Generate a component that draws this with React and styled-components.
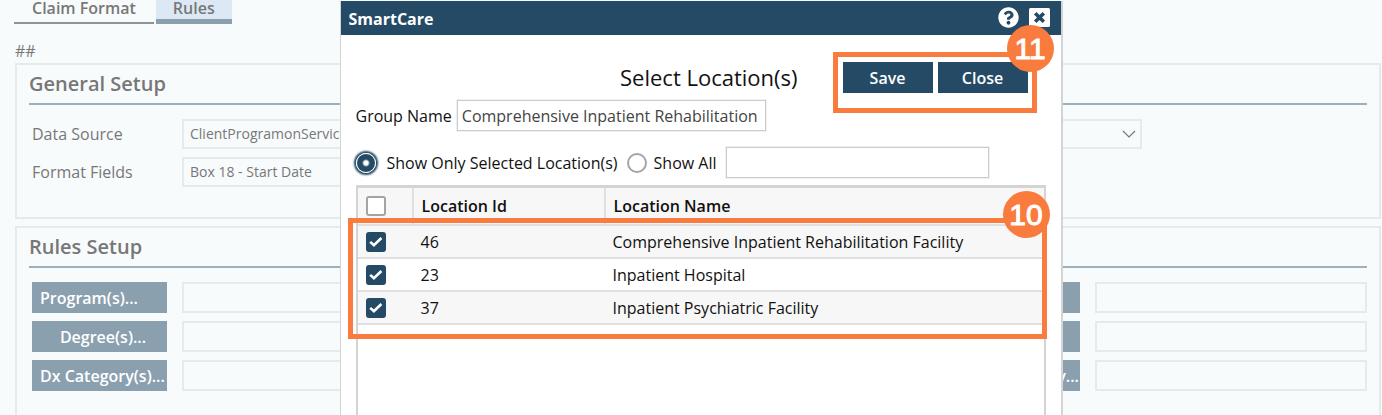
import React, { useState } from "react";
import styled, { createGlobalStyle, css } from "styled-components";
import { FaQuestionCircle } from "react-icons/fa";

const ruleRows = [
  { left: "Program(s)...", align: "flex-start", right: "Plan(s)...", rightAlign: "center" },
  { left: "Degree(s)...", align: "center", right: "Code(s)...", rightAlign: "center" },
  { left: "Dx Category(s)...", align: "flex-start", right: "Svc Category...", rightAlign: "flex-end" },
];

const locations = [
  { id: 46, name: "Comprehensive Inpatient Rehabilitation Facility" },
  { id: 23, name: "Inpatient Hospital" },
  { id: 37, name: "Inpatient Psychiatric Facility" },
];

function Checkbox({ label, checked, onChange }) {
  return (
    <CheckboxStyled>
      <input type="checkbox" aria-label={label} checked={checked} onChange={onChange} />
      {checked && (
        <svg width="20" height="20" viewBox="0 0 20 20" aria-hidden="true">
          <path d="M4.2 9.9 L7.9 13.3 L15.4 6" fill="none" stroke="#fff" strokeWidth="2.6" />
        </svg>
      )}
    </CheckboxStyled>
  );
}

function BillingRules() {
  return (
    <PageStyled>
      <TabsStyled>
        <TabStyled type="button">Claim Format</TabStyled>
        <TabStyled type="button" $active>Rules</TabStyled>
      </TabsStyled>
      <RecordMark>##</RecordMark>

      <PanelStyled>
        <h2>General Setup</h2>
        <FormRow>
          <label htmlFor="dataSource">Data Source</label>
          <SelectWrapper>
            <select id="dataSource">
              <option>ClientProgramonService</option>
            </select>
            <svg width="14" height="8" viewBox="0 0 14 8" aria-hidden="true">
              <path d="M1 1 L7 7 L13 1" fill="none" stroke="#777" strokeWidth="1.2" />
            </svg>
          </SelectWrapper>
        </FormRow>
        <FormRow $short>
          <label htmlFor="formatFields">Format Fields</label>
          <SelectWrapper>
            <select id="formatFields">
              <option>Box 18 - Start Date</option>
            </select>
          </SelectWrapper>
        </FormRow>
      </PanelStyled>

      <PanelStyled $last>
        <h2>Rules Setup</h2>
        <RulesGrid>
          {ruleRows.map((row) => (
            <React.Fragment key={row.left}>
              <RuleButton type="button" $align={row.align}>{row.left}</RuleButton>
              <RuleInput aria-label={row.left} />
              <RuleButton type="button" $align={row.rightAlign}>{row.right}</RuleButton>
              <RuleInput aria-label={row.right} />
            </React.Fragment>
          ))}
        </RulesGrid>
      </PanelStyled>
    </PageStyled>
  );
}

function LocationDialog() {
  //state
  const [filter, setFilter] = useState("selected");
  const [selectedIds, setSelectedIds] = useState([46, 23, 37]);
  const [groupName, setGroupName] = useState("Comprehensive Inpatient Rehabilitation Facility");
  const [search, setSearch] = useState("");

  //comportement
  const toggleLocation = (id) => {
    setSelectedIds(
      selectedIds.includes(id) ? selectedIds.filter((other) => other !== id) : [...selectedIds, id]
    );
  };

  //render
  return (
    <DialogStyled role="dialog" aria-label="SmartCare">
      <DialogHeader>
        <h1>SmartCare</h1>
        <IconButton type="button" aria-label="Help">
          <FaQuestionCircle size={21} color="#fff" />
        </IconButton>
        <IconButton type="button" aria-label="Close window">
          <svg width="21" height="19" viewBox="0 0 21 19">
            <rect width="21" height="19" rx="1.5" fill="#fff" />
            <path d="M6.2 5.2 L14.8 13.8 M14.8 5.2 L6.2 13.8" stroke="#254a66" strokeWidth="3.6" />
          </svg>
        </IconButton>
      </DialogHeader>

      <DialogBody>
        <TitleRow>
          <h2>Select Location(s)</h2>
          <ActionsStyled>
            <ActionButton type="button">Save</ActionButton>
            <ActionButton type="button">Close</ActionButton>
            <ActionsCallout>
              <Badge $right="-22px">11</Badge>
            </ActionsCallout>
          </ActionsStyled>
        </TitleRow>

        <GroupRow>
          <label htmlFor="groupName">Group Name</label>
          <TextField
            id="groupName"
            $width="309px"
            value={groupName}
            onChange={(event) => setGroupName(event.target.value)}
          />
        </GroupRow>

        <FilterRow>
          <RadioLabel>
            <input
              type="radio"
              name="filter"
              checked={filter === "selected"}
              onChange={() => setFilter("selected")}
            />
            Show Only Selected Location(s)
          </RadioLabel>
          <RadioLabel>
            <input
              type="radio"
              name="filter"
              checked={filter === "all"}
              onChange={() => setFilter("all")}
            />
            Show All
          </RadioLabel>
          <TextField
            aria-label="Search locations"
            $width="263px"
            value={search}
            onChange={(event) => setSearch(event.target.value)}
          />
        </FilterRow>

        <TableArea>
          <LocationTable>
            <colgroup>
              <col className="check" />
              <col className="id" />
              <col />
            </colgroup>
            <thead>
              <tr>
                <th><Checkbox label="Select all" checked={false} onChange={() => setSelectedIds([])} /></th>
                <th>Location Id</th>
                <th>Location Name</th>
              </tr>
            </thead>
            <tbody>
              {locations.map(({ id, name }) => (
                <tr key={id}>
                  <td>
                    <Checkbox
                      label={name}
                      checked={selectedIds.includes(id)}
                      onChange={() => toggleLocation(id)}
                    />
                  </td>
                  <td>{id}</td>
                  <td>{name}</td>
                </tr>
              ))}
            </tbody>
          </LocationTable>
          <RowsCallout>
            <Badge $right="-8px">10</Badge>
          </RowsCallout>
        </TableArea>
      </DialogBody>
    </DialogStyled>
  );
}

export default function App() {
  return (
    <>
      <GlobalStyle />
      <BillingRules />
      <OverlayStyled>
        <LocationDialog />
      </OverlayStyled>
    </>
  );
}

const GlobalStyle = createGlobalStyle`
  * {
    box-sizing: border-box;
  }
  body {
    margin: 0;
    background: #f7fbfc;
    font-family: "Open Sans", "Noto Sans", sans-serif;
    font-size: 16px;
    line-height: 20px;
    color: #111;
  }
  button, input, select {
    font: inherit;
    color: inherit;
    border-radius: 0;
  }
  h1, h2 {
    margin: 0;
  }
`;

const PageStyled = styled.main`
  display: flex;
  flex-direction: column;
  height: 100vh;
  overflow: hidden;
  padding: 0 1px 0 15px;
  color: #777;
`;

const TabsStyled = styled.nav`
  display: flex;
  gap: 2px;
  height: 24px;
  margin-left: -1px;
`;

const TabStyled = styled.button`
  height: 24px;
  padding: 0 18px 6px;
  border: none;
  border-bottom: 2px solid #8f9394;
  background: none;
  font-weight: 600;
  line-height: 16px;

  ${({ $active }) =>
    $active &&
    css`
      padding: 0 17px 5px;
      border-bottom: 5px solid #8aa0af;
      background: #dce9f5;
    `}
`;

const RecordMark = styled.div`
  margin: 17px 0 2px;
`;

const PanelStyled = styled.section`
  padding: 0 12px 22px;
  margin-bottom: 7px;
  border: 2px solid #e6eaeb;

  h2 {
    padding: 6px 0 6px;
    margin-bottom: 14px;
    border-bottom: 2px solid #9db0bc;
    font-size: 20px;
    font-weight: 600;
    line-height: 26px;
  }

  ${({ $last }) =>
    $last &&
    css`
      flex: 1;
      margin-bottom: 0;
      border-bottom: none;
    `}
`;

const FormRow = styled.div`
  display: grid;
  grid-template-columns: 150px 1fr;
  align-items: center;
  padding-left: 3px;
  padding-right: ${({ $short }) => ($short ? "50%" : "225px")};
  margin-bottom: 8px;
`;

const SelectWrapper = styled.div`
  position: relative;

  select {
    display: block;
    width: 100%;
    height: 30px;
    padding: 0 6px;
    appearance: none;
    border: 2px solid #e6eaeb;
    background: none;
    font-size: 14px;
  }
  svg {
    position: absolute;
    right: 6px;
    top: 11px;
    pointer-events: none;
  }
`;

const RulesGrid = styled.div`
  display: grid;
  grid-template-columns: 135px 1fr 135px 272px;
  gap: 8px 15px;
  padding-left: 3px;
`;

const RuleButton = styled.button`
  display: flex;
  align-items: center;
  justify-content: ${({ $align }) => $align};
  height: 31px;
  padding: 0 1px 0 8px;
  overflow: hidden;
  border: none;
  background: #8aa0af;
  color: #fff;
  font-weight: 600;
  white-space: nowrap;
`;

const RuleInput = styled.input`
  width: 100%;
  height: 31px;
  border: 2px solid #e6eaeb;
  background: none;
`;

const OverlayStyled = styled.div`
  position: fixed;
  inset: 0;
  display: flex;
  justify-content: center;
  padding: 1px 0 0 20px;
`;

const DialogStyled = styled.section`
  display: flex;
  flex-direction: column;
  flex: 0 1 723px;
  border: solid #d4d4d4;
  border-width: 0 2px 0 1px;
  background: #fff;
`;

const DialogHeader = styled.header`
  display: flex;
  align-items: center;
  gap: 10px;
  height: 34px;
  padding: 0 11px 2px 8px;
  background: #254a66;
  color: #fff;

  h1 {
    flex: 1;
    padding-top: 4px;
    font-size: 16px;
    font-weight: 700;
  }
`;

const IconButton = styled.button`
  display: flex;
  padding: 0;
  border: none;
  background: none;
`;

const DialogBody = styled.div`
  display: flex;
  flex-direction: column;
  flex: 1;
  padding: 27px 15px 0;
`;

const TitleRow = styled.div`
  display: flex;
  align-items: flex-start;
  justify-content: flex-end;
  gap: 45px;
  padding-right: 18px;

  h2 {
    font-size: 22px;
    font-weight: 400;
    line-height: 30px;
  }
`;

const ActionsStyled = styled.div`
  position: relative;
  display: flex;
  gap: 5px;
`;

const ActionButton = styled.button`
  width: 90px;
  height: 31px;
  padding: 0;
  border: none;
  background: #254a66;
  color: #fff;
  font-weight: 600;
`;

const calloutStyle = css`
  position: absolute;
  border: 5px solid #f97b3d;
  pointer-events: none;
`;

const ActionsCallout = styled.div`
  ${calloutStyle}
  inset: -10px -9px -20px -10px;
`;

const RowsCallout = styled.div`
  ${calloutStyle}
  top: 30px;
  left: -10px;
  right: -3px;
  height: 121px;
`;

const Badge = styled.span`
  position: absolute;
  top: -32px;
  right: ${({ $right }) => $right};
  width: 47px;
  height: 47px;
  border-radius: 50%;
  background: #f97b3d;
  color: #fff;
  font-family: "Liberation Sans", Arial, sans-serif;
  font-size: 30px;
  line-height: 47px;
  text-align: center;
  -webkit-text-stroke: 1px #fff;
`;

const GroupRow = styled.div`
  display: flex;
  align-items: center;
  gap: 5px;
  margin-top: 7px;
`;

const FilterRow = styled.div`
  display: flex;
  align-items: center;
  gap: 9px;
  margin-top: 16px;
`;

const TextField = styled.input`
  width: ${({ $width }) => $width};
  height: 31px;
  padding: 0 4px;
  border: 1px solid #ccc;
  outline: 1px solid #f0f0f0;
  background: #fff;
  color: #444;
`;

const RadioLabel = styled.label`
  display: flex;
  align-items: center;
  gap: 7px;

  input {
    width: 20px;
    height: 20px;
    margin: 0;
    appearance: none;
    border: 2px solid #a4a4a4;
    border-radius: 50%;
    background: #fff;
  }
  input:checked {
    margin-right: 4px;
    border: 1px solid #fff;
    background: radial-gradient(circle, #fff 2px, #254a66 4px);
    box-shadow: 0 0 2px 2px #254a66;
  }
`;

const TableArea = styled.div`
  position: relative;
  flex: 1;
  margin-top: 7px;
  border: solid #d4d4d4;
  border-width: 3px 2px 0;
`;

const LocationTable = styled.table`
  width: 100%;
  border-collapse: collapse;
  table-layout: fixed;

  .check {
    width: 55px;
  }
  .id {
    width: 192px;
  }
  th, td {
    height: 33px;
    padding: 0 8px;
    border-bottom: 2px solid #e0e0e0;
    text-align: left;
  }
  th {
    height: 37px;
    border-right: 2px solid #e0e0e0;
    background: #f7f7f7;
    font-weight: 600;
  }
  th:last-child {
    border-right: none;
  }
  tbody tr:nth-child(odd) {
    background: #f7f7f7;
  }
`;

const CheckboxStyled = styled.label`
  position: relative;
  display: block;
  width: 20px;
  height: 20px;

  input {
    display: block;
    width: 20px;
    height: 20px;
    margin: 0;
    appearance: none;
    border: 2px solid #a4a4a4;
    border-radius: 3px;
    background: #fff;
  }
  input:checked {
    border-color: #254a66;
    background: #254a66;
  }
  svg {
    position: absolute;
    inset: 0;
  }
`;
